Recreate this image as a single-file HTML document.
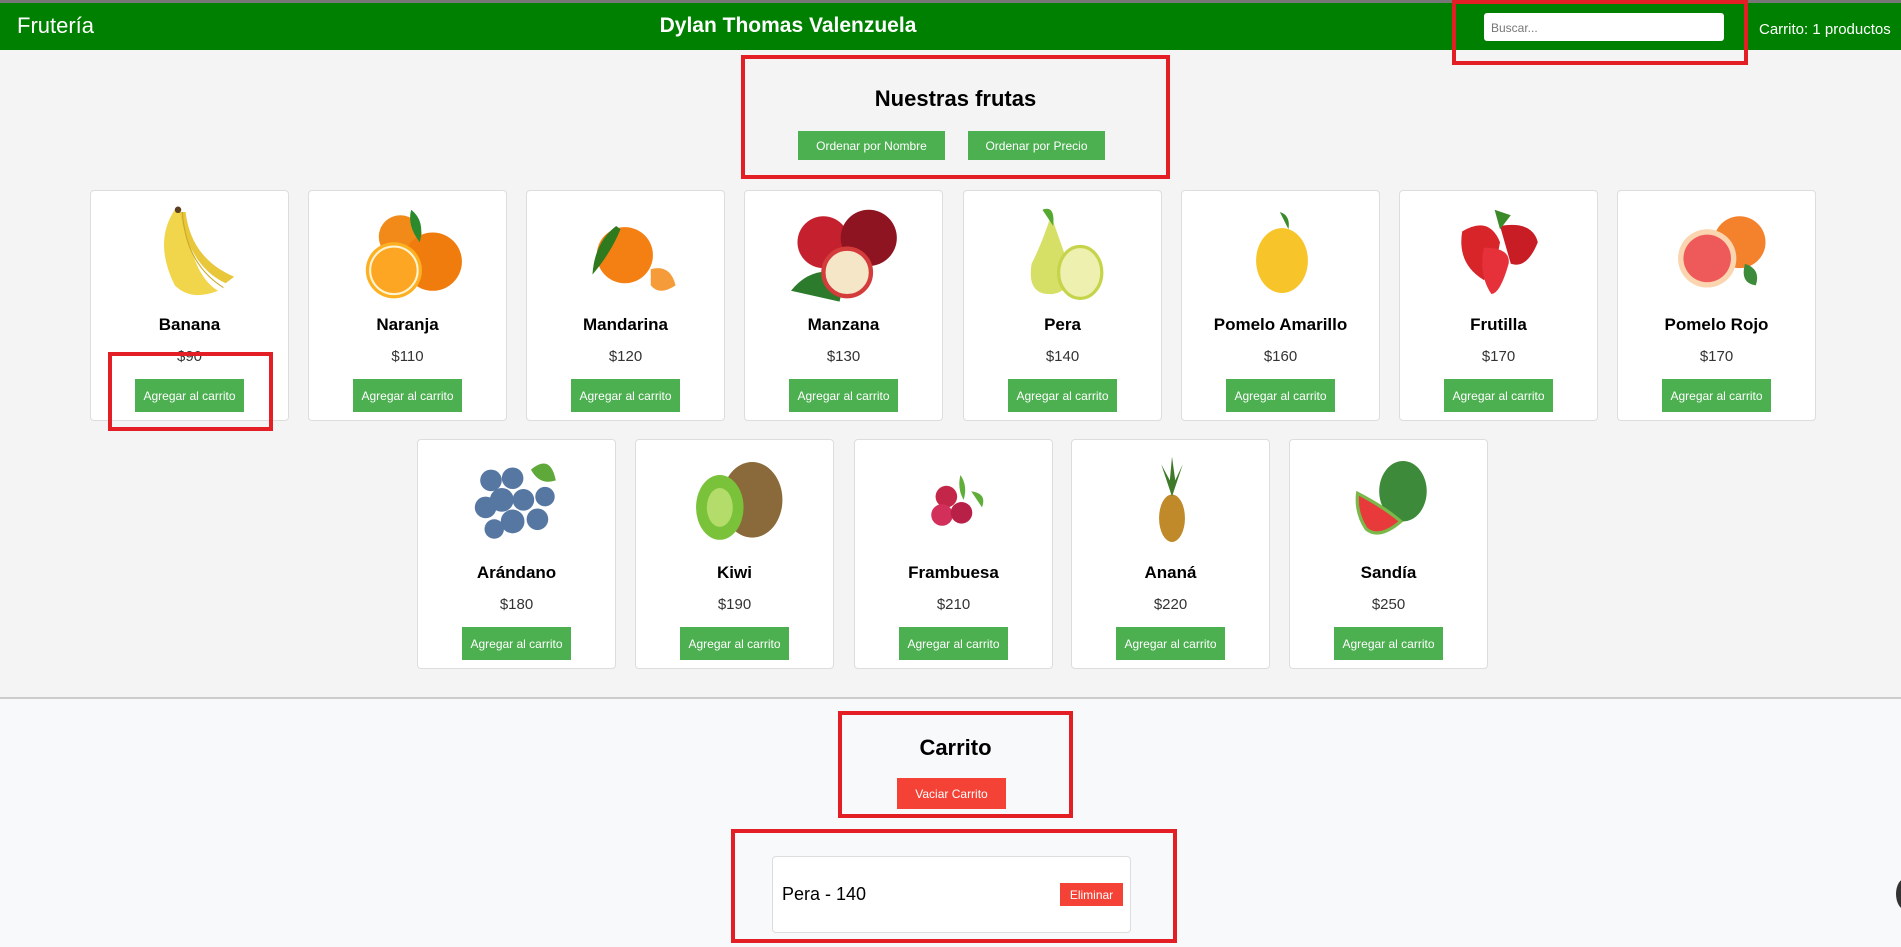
<!DOCTYPE html>
<html><head><meta charset="utf-8">
<style>
*{box-sizing:border-box;margin:0;padding:0}
body{width:1901px;height:947px;overflow:hidden;background:#f4f4f4;font-family:"Liberation Sans",Arial,sans-serif;position:relative}
.abs{position:absolute}
.hdr{left:0;top:3px;width:1901px;height:47px;background:#008000}
.topline{left:0;top:0;width:1901px;height:3px;background:#777}
.red{position:absolute;border:4px solid #e31e24}
.btn{position:absolute;background:#4caf50;color:#fff;font-size:12px;display:flex;align-items:center;justify-content:center}
.card{position:absolute;width:199px;background:#fff;border:1px solid #ddd;border-radius:4px}
.card .nm{position:absolute;left:0;width:100%;text-align:center;font-weight:bold;font-size:17px;color:#000}
.card .pr{position:absolute;left:0;width:100%;text-align:center;font-size:15px;color:#333}
.card .btn{left:44px;width:109px;height:33px}
.card svg{position:absolute;left:35px;top:8px;width:130px;height:108px}
</style></head><body>
<div class="abs topline"></div>
<div class="abs hdr"></div>
<div class="abs" style="left:17px;top:13px;font-size:22px;color:#fff">Frutería</div>
<div class="abs" style="left:600px;width:376px;text-align:center;top:14px;font-size:21px;font-weight:bold;color:#fff">Dylan Thomas Valenzuela</div>
<div class="abs" style="left:1484px;top:13px;width:240px;height:28px;background:#fff;border-radius:3px;font-size:12px;color:#777;padding:8px 7px">Buscar...</div>
<div class="abs" style="left:1759px;top:21px;font-size:15px;color:#fff">Carrito: 1 productos</div>
<div class="red" style="left:1452px;top:0;width:296px;height:65px"></div>

<div class="abs" style="left:741px;width:429px;text-align:center;top:86px;font-size:22px;font-weight:bold">Nuestras frutas</div>
<div class="btn" style="left:798px;top:131px;width:147px;height:29px;font-size:12px">Ordenar por Nombre</div>
<div class="btn" style="left:968px;top:131px;width:137px;height:29px;font-size:12px">Ordenar por Precio</div>
<div class="red" style="left:741px;top:55px;width:429px;height:124px"></div>

<!-- row 1 -->
<div class="card" style="left:90px;top:190px;height:231px">
<svg viewBox="0 0 120 100"><path d="M45 10 Q25 40 45 80 Q60 95 85 85 Q60 70 55 15Z" fill="#f1d54a"/><path d="M55 12 Q60 55 100 72 L92 78 Q58 62 50 12Z" fill="#e8c73a"/><path d="M52 12 Q55 60 90 82" stroke="#c9a92a" fill="none"/><circle cx="48" cy="10" r="3" fill="#5a4020"/></svg>
<div class="nm" style="top:124px">Banana</div><div class="pr" style="top:157px">$90</div><div class="btn" style="top:188px">Agregar al carrito</div></div>
<div class="card" style="left:308px;top:190px;height:231px">
<svg viewBox="0 0 120 100"><circle cx="52" cy="35" r="20" fill="#f28a1a"/><circle cx="82" cy="58" r="27" fill="#f07c0e"/><circle cx="46" cy="66" r="26" fill="#fdb022"/><circle cx="46" cy="66" r="22" fill="#fca623" stroke="#fff3d0" stroke-width="2"/><path d="M62 10 Q75 20 70 40 Q58 25 62 10Z" fill="#2b8a2b"/></svg>
<div class="nm" style="top:124px">Naranja</div><div class="pr" style="top:157px">$110</div><div class="btn" style="top:188px">Agregar al carrito</div></div>
<div class="card" style="left:526px;top:190px;height:231px">
<svg viewBox="0 0 120 100"><circle cx="58" cy="52" r="26" fill="#f47f12"/><path d="M50 25 Q30 40 28 70 Q45 50 54 28Z" fill="#2f7a1e"/><path d="M82 65 Q100 60 105 80 Q90 90 82 80Z" fill="#f59b3a"/></svg>
<div class="nm" style="top:124px">Mandarina</div><div class="pr" style="top:157px">$120</div><div class="btn" style="top:188px">Agregar al carrito</div></div>
<div class="card" style="left:744px;top:190px;height:231px">
<svg viewBox="0 0 120 100" style="left:25px;width:150px"><circle cx="40" cy="40" r="24" fill="#c5202e"/><circle cx="82" cy="36" r="26" fill="#8e1422"/><path d="M10 85 Q30 60 60 70 L55 95Z" fill="#2c7a2c"/><circle cx="62" cy="68" r="22" fill="#f6e6c8" stroke="#d43b3b" stroke-width="4"/></svg>
<div class="nm" style="top:124px">Manzana</div><div class="pr" style="top:157px">$130</div><div class="btn" style="top:188px">Agregar al carrito</div></div>
<div class="card" style="left:963px;top:190px;height:231px">
<svg viewBox="0 0 120 100"><path d="M48 15 Q40 40 30 60 Q25 90 50 88 Q70 85 62 55 Q55 35 48 15Z" fill="#d7e066"/><ellipse cx="75" cy="68" rx="20" ry="24" fill="#eef0b0" stroke="#c5d44a" stroke-width="3"/><path d="M40 10 Q52 5 50 25Z" fill="#55a830"/></svg>
<div class="nm" style="top:124px">Pera</div><div class="pr" style="top:157px">$140</div><div class="btn" style="top:188px">Agregar al carrito</div></div>
<div class="card" style="left:1181px;top:190px;height:231px">
<svg viewBox="0 0 120 100"><ellipse cx="60" cy="57" rx="24" ry="30" fill="#f7c52a"/><path d="M58 12 Q68 15 66 28Z" fill="#3a8a2a"/></svg>
<div class="nm" style="top:124px">Pomelo Amarillo</div><div class="pr" style="top:157px">$160</div><div class="btn" style="top:188px">Agregar al carrito</div></div>
<div class="card" style="left:1399px;top:190px;height:231px">
<svg viewBox="0 0 120 100"><path d="M25 30 Q50 15 60 40 Q55 70 45 75 Q20 60 25 30Z" fill="#d7252a"/><path d="M60 25 Q90 20 95 40 Q85 65 70 60Z" fill="#c81d24"/><path d="M45 45 Q70 45 68 60 Q60 88 52 88 Q40 70 45 45Z" fill="#e6303a"/><path d="M55 10 L60 28 L70 15Z" fill="#3b8a2a"/></svg>
<div class="nm" style="top:124px">Frutilla</div><div class="pr" style="top:157px">$170</div><div class="btn" style="top:188px">Agregar al carrito</div></div>
<div class="card" style="left:1617px;top:190px;height:231px">
<svg viewBox="0 0 120 100"><circle cx="80" cy="40" r="24" fill="#f4812b"/><circle cx="50" cy="55" r="27" fill="#fbd4b0"/><circle cx="50" cy="55" r="22" fill="#ee5a5a"/><path d="M85 60 Q100 65 95 80 Q80 78 85 60Z" fill="#3d8a3a"/></svg>
<div class="nm" style="top:124px">Pomelo Rojo</div><div class="pr" style="top:157px">$170</div><div class="btn" style="top:188px">Agregar al carrito</div></div>
<div class="red" style="left:108px;top:352px;width:165px;height:79px"></div>

<!-- row 2 -->
<div class="card" style="left:417px;top:439px;height:230px">
<svg viewBox="0 0 120 100"><g fill="#5577a2"><circle cx="35" cy="30" r="10"/><circle cx="55" cy="28" r="10"/><circle cx="45" cy="48" r="11"/><circle cx="65" cy="48" r="10"/><circle cx="30" cy="55" r="10"/><circle cx="55" cy="68" r="11"/><circle cx="78" cy="66" r="10"/><circle cx="38" cy="75" r="9"/><circle cx="85" cy="45" r="9"/></g><path d="M72 20 Q90 5 95 30 Q80 35 72 20Z" fill="#5fa83a"/></svg>
<div class="nm" style="top:123px">Arándano</div><div class="pr" style="top:156px">$180</div><div class="btn" style="top:187px">Agregar al carrito</div></div>
<div class="card" style="left:635px;top:439px;height:230px">
<svg viewBox="0 0 120 100"><ellipse cx="75" cy="48" rx="28" ry="35" fill="#8a6a3a"/><ellipse cx="45" cy="55" rx="22" ry="30" fill="#7ac23a"/><ellipse cx="45" cy="55" rx="12" ry="18" fill="#b4dc6a"/></svg>
<div class="nm" style="top:123px">Kiwi</div><div class="pr" style="top:156px">$190</div><div class="btn" style="top:187px">Agregar al carrito</div></div>
<div class="card" style="left:854px;top:439px;height:230px">
<svg viewBox="0 0 120 100"><circle cx="52" cy="45" r="10" fill="#c4264a"/><circle cx="48" cy="62" r="10" fill="#d2305a"/><circle cx="66" cy="60" r="10" fill="#b82048"/><path d="M65 25 Q72 35 68 48 Q62 38 65 25Z M75 40 Q90 42 85 55Z" fill="#5fae3a"/></svg>
<div class="nm" style="top:123px">Frambuesa</div><div class="pr" style="top:156px">$210</div><div class="btn" style="top:187px">Agregar al carrito</div></div>
<div class="card" style="left:1071px;top:439px;height:230px">
<svg viewBox="0 0 120 100"><ellipse cx="60" cy="65" rx="12" ry="22" fill="#c08a2a"/><path d="M60 45 L50 15 L58 30 L60 8 L63 30 L70 15Z" fill="#3f7a2a"/></svg>
<div class="nm" style="top:123px">Ananá</div><div class="pr" style="top:156px">$220</div><div class="btn" style="top:187px">Agregar al carrito</div></div>
<div class="card" style="left:1289px;top:439px;height:230px">
<svg viewBox="0 0 120 100"><ellipse cx="72" cy="40" rx="22" ry="28" fill="#3d8a3a"/><path d="M30 42 Q55 55 70 68 Q50 85 38 75 Q28 60 30 42Z" fill="#e83a3a" stroke="#7bb84a" stroke-width="3"/></svg>
<div class="nm" style="top:123px">Sandía</div><div class="pr" style="top:156px">$250</div><div class="btn" style="top:187px">Agregar al carrito</div></div>

<!-- cart -->
<div class="abs" style="left:0;top:697px;width:1901px;height:250px;background:#f8f9fa;border-top:2px solid #ccc"></div>
<div class="abs" style="left:838px;width:235px;text-align:center;top:735px;font-size:22px;font-weight:bold">Carrito</div>
<div class="btn" style="left:897px;top:778px;width:109px;height:31px;background:#f44336;font-size:12px">Vaciar Carrito</div>
<div class="red" style="left:838px;top:711px;width:235px;height:107px"></div>
<div class="abs" style="left:772px;top:856px;width:359px;height:77px;background:#fff;border:1px solid #ddd;border-radius:4px"></div>
<div class="abs" style="left:782px;top:884px;font-size:18px">Pera - 140</div>
<div class="btn" style="left:1060px;top:883px;width:63px;height:23px;background:#f44336;font-size:12px">Eliminar</div>
<div class="red" style="left:731px;top:829px;width:446px;height:114px"></div>
<div class="abs" style="left:1896px;top:878px;width:20px;height:32px;border-radius:50%;background:#333"></div>
</body></html>
